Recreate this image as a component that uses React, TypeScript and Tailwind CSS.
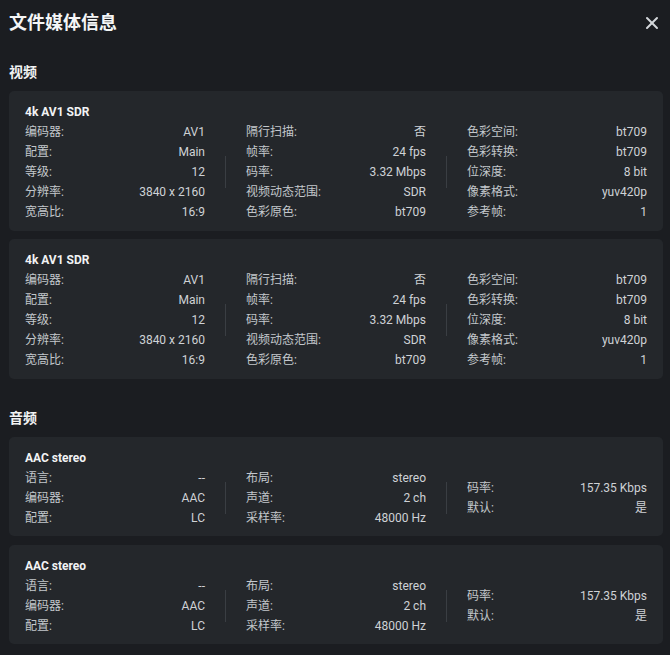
import { X } from 'lucide-react'

type Row = [string, string]

const videoCols: Row[][] = [
  [
    ['编码器:', 'AV1'],
    ['配置:', 'Main'],
    ['等级:', '12'],
    ['分辨率:', '3840 x 2160'],
    ['宽高比:', '16:9'],
  ],
  [
    ['隔行扫描:', '否'],
    ['帧率:', '24 fps'],
    ['码率:', '3.32 Mbps'],
    ['视频动态范围:', 'SDR'],
    ['色彩原色:', 'bt709'],
  ],
  [
    ['色彩空间:', 'bt709'],
    ['色彩转换:', 'bt709'],
    ['位深度:', '8 bit'],
    ['像素格式:', 'yuv420p'],
    ['参考帧:', '1'],
  ],
]

const audioCols: Row[][] = [
  [
    ['语言:', '--'],
    ['编码器:', 'AAC'],
    ['配置:', 'LC'],
  ],
  [
    ['布局:', 'stereo'],
    ['声道:', '2 ch'],
    ['采样率:', '48000 Hz'],
  ],
  [
    ['码率:', '157.35 Kbps'],
    ['默认:', '是'],
  ],
]

function Column({ rows }: { rows: Row[] }) {
  return (
    <div className="flex w-[180px] flex-col">
      {rows.map(([label, value]) => (
        <div key={label} className="flex h-5 items-center justify-between">
          <span className="text-[#c3c7cc]">{label}</span>
          <span className="text-[#cfd2d6]">{value}</span>
        </div>
      ))}
    </div>
  )
}

function StreamCard({ title, cols, short }: { title: string; cols: Row[][]; short?: boolean }) {
  return (
    <div className={`rounded-[5px] bg-[#24272b] px-4 pt-[11px] text-[12px] ${short ? 'pb-2' : 'pb-[9px]'}`}>
      <div className="h-5 font-bold leading-5 text-[#f2f3f4]">{title}</div>
      <div className="flex items-center">
        <Column rows={cols[0]} />
        <div className="mx-5 h-8 w-px bg-[#3a3e43]" />
        <Column rows={cols[1]} />
        <div className="mx-5 h-8 w-px bg-[#3a3e43]" />
        <Column rows={cols[2]} />
      </div>
    </div>
  )
}

export default function App() {
  return (
    <div
      className="min-h-[655px] bg-[#1b1d21] pl-[9px] pr-[7px] pt-[9px] text-[#cfd2d6]"
      style={{ fontFamily: 'Roboto, "Noto Sans CJK SC", sans-serif' }}
    >
      <div className="flex h-7 items-center justify-between">
        <h1 className="text-[18px] font-bold leading-7 text-[#f4f5f6]">文件媒体信息</h1>
        <button className="mr-px text-[#d4d7db]">
          <X className="h-5 w-5" strokeWidth={2.4} />
        </button>
      </div>

      <h2 className="mt-[25px] mb-[9px] h-5 text-[14px] font-bold leading-5 text-[#f2f3f4]">视频</h2>
      <div className="flex flex-col gap-2">
        <StreamCard title="4k AV1 SDR" cols={videoCols} />
        <StreamCard title="4k AV1 SDR" cols={videoCols} />
      </div>

      <h2 className="mt-[29px] mb-[9px] h-5 text-[14px] font-bold leading-5 text-[#f2f3f4]">音频</h2>
      <div className="flex flex-col gap-[9px]">
        <StreamCard title="AAC stereo" cols={audioCols} short />
        <StreamCard title="AAC stereo" cols={audioCols} short />
      </div>
    </div>
  )
}
